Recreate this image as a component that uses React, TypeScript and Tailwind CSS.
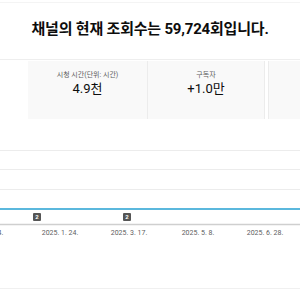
import React from 'react'

const font = { fontFamily: 'Roboto, "Noto Sans CJK KR", "Noto Sans", sans-serif' }

const cards = [
  { label: '시청 시간(단위: 시간)', value: '4.9천', w: 'w-[120px]' },
  { label: '구독자', value: '+1.0만', w: 'w-[117px]' },
]

const ticks = [
  { text: '2025. 1. 4.', x: -13 },
  { text: '2025. 1. 24.', x: 60 },
  { text: '2025. 3. 17.', x: 129 },
  { text: '2025. 5. 8.', x: 198 },
  { text: '2025. 6. 28.', x: 265 },
]

const markers = [37, 127]

const Chart = () => (
  <div className="relative h-[170px] w-full">
    <svg width="300" height="170" className="absolute left-0 top-0">
      <line x1="0" x2="300" y1="31.5" y2="31.5" stroke="#ececec" />
      <line x1="0" x2="300" y1="50.5" y2="50.5" stroke="#ececec" />
      <line x1="0" x2="300" y1="70.5" y2="70.5" stroke="#ececec" />
      <line x1="0" x2="300" y1="90" y2="90" stroke="#5bb8dd" strokeWidth="2" />
      <line x1="0" x2="300" y1="105.5" y2="105.5" stroke="#cfcfcf" strokeWidth="1.5" />
      <line x1="0" x2="300" y1="169.5" y2="169.5" stroke="#f0f0f0" />
    </svg>
    {markers.map(x => (
      <div
        key={x}
        className="absolute top-[94px] flex h-[8px] w-[8px] items-center justify-center rounded-[1px] bg-[#555] text-[6px] font-bold leading-none text-white"
        style={{ left: x - 4 }}
      >
        2
      </div>
    ))}
    {ticks.map(t => (
      <div
        key={t.text}
        className="absolute top-[109px] w-[50px] -translate-x-1/2 text-center text-[7px] leading-[10px] text-[#606060]"
        style={{ left: t.x }}
      >
        {t.text}
      </div>
    ))}
  </div>
)

export default function App() {
  return (
    <div className="flex h-[300px] w-[300px] flex-col overflow-hidden bg-white" style={font}>
      <div className="mt-[2px] h-px w-full bg-[#f4f4f4]" />
      <div className="flex h-[56px] items-center justify-center pb-[4px] text-[15px] font-bold tracking-[-0.2px] text-[#0d0d0d]">
        채널의 현재 조회수는 59,724회입니다.
      </div>
      <div className="flex h-[60px] w-full border-t border-[#eeeeee]">
        <div className="w-[28px] shrink-0 bg-white" />
        {cards.map(c => (
          <div
            key={c.label}
            className={`${c.w} mt-[1px] flex shrink-0 flex-col items-center border-r border-[#ececec] bg-[#f9f9f9] pt-[9px]`}
          >
            <span className="text-[7px] leading-[10px] text-[#606060]">{c.label}</span>
            <span className="text-[13px] leading-[18px] text-[#0d0d0d]">{c.value}</span>
          </div>
        ))}
        <div className="ml-[3px] mt-[1px] flex-1 border-l border-[#ececec] bg-[#f9f9f9]" />
      </div>
      <Chart />
    </div>
  )
}
